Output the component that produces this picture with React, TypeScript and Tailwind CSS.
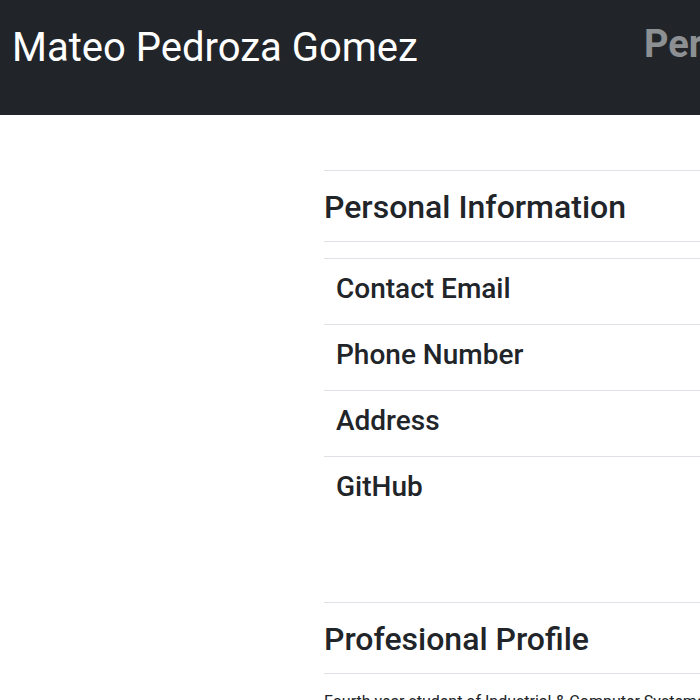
const contactRows = ["Contact Email", "Phone Number", "Address", "GitHub"];

const sectionTitle = "text-[32px] font-medium leading-[38px] text-[#212529]";

const Rule = () => <hr className="border-0 border-t border-[#dee2e6]" />;

export default function App() {
  return (
    <div className="w-full min-h-[700px] overflow-hidden bg-white font-['Roboto',sans-serif] text-[#212529]">
      <header className="h-[115px] w-[1200px] bg-[#212529]">
        <div className="grid grid-cols-[632px_1fr] items-start px-3">
          <h1 className="pt-[24px] text-[40px] font-normal leading-[48px] text-white">Mateo Pedroza Gomez</h1>
          <nav className="flex gap-8 pt-[21px] text-[38px] font-bold leading-[46px] text-[#8d9093]">
            <span>Personal Information</span>
            <span>Profile</span>
          </nav>
        </div>
      </header>

      <div className="flex w-[1200px]">
        <aside className="w-[312px] shrink-0" />
        <main className="w-[700px] shrink-0 px-3 pt-[55px]">
          <section>
            <Rule />
            <h2 className={`mt-[17px] ${sectionTitle}`}>Personal Information</h2>
            <div className="mt-[15px]">
              <Rule />
            </div>
            <ul className="mt-4">
              {contactRows.map((row) => (
                <li key={row} className="h-[66px] border-t border-[#dee2e6] px-3 pt-[13px]">
                  <h3 className="text-[28px] font-medium leading-[34px]">{row}</h3>
                </li>
              ))}
            </ul>
          </section>

          <section className="mt-[80px]">
            <Rule />
            <h2 className={`mt-[17px] ${sectionTitle}`}>Profesional Profile</h2>
            <div className="mt-[15px]">
              <Rule />
            </div>
            <p className="mt-4 text-base leading-6">
              Fourth year student of Industrial &amp; Computer Systems Engineering, interested in software
              development, data analysis and process optimization.
            </p>
          </section>
        </main>
      </div>
    </div>
  );
}
